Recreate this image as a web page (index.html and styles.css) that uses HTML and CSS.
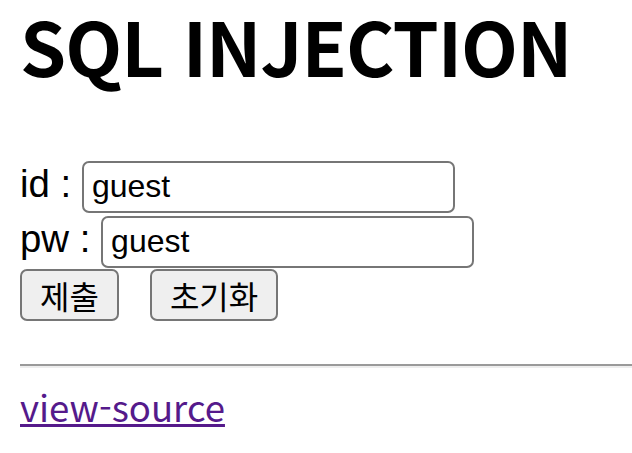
FILE: index.html
```html
<!DOCTYPE html>
<html lang="ko">

<head>
  <meta charset="UTF-8">
  <meta name="viewport" content="width=device-width, initial-scale=1.0">
  <title>SQL INJECTION</title>
  <link rel="stylesheet" href="styles.css">
</head>

<body>
  <h1>SQL INJECTION</h1>
  <form class="login-form">
    <div class="form-row row-id">
      <label for="id">id : </label>
      <input type="text" id="id" name="id" value="guest">
    </div>
    <div class="form-row row-pw">
      <label for="pw">pw : </label>
      <input type="text" id="pw" name="pw" value="guest">
    </div>
    <div class="form-row row-buttons">
      <button type="submit">제출</button>
      <button type="reset">초기화</button>
    </div>
  </form>
  <hr>
  <div class="source-link">
    <a href="#">view-source</a>
  </div>
</body>

</html>
```

FILE: styles.css
```css
body {
  margin: 0;
  padding-left: 20px;
  font-family: "Liberation Sans", Arial, "Noto Sans CJK KR", sans-serif;
  font-size: 38.4px;
  color: #000;
  background: #fff;
}

h1 {
  margin: 1px 0 0;
  font-family: "Noto Sans CJK KR", sans-serif;
  font-size: 74px;
  font-weight: bold;
  line-height: 1.2;
  letter-spacing: -1px;
}

.login-form {
  margin-top: 71px;
}

.form-row {
  display: flex;
  align-items: baseline;
  white-space: pre;
}

.row-pw {
  margin-top: 3px;
}

.row-buttons {
  gap: 31px;
  margin-top: 1px;
}

input {
  box-sizing: border-box;
  width: 373px;
  height: 52px;
  padding: 0 8px;
  font-family: "Liberation Sans", Arial, sans-serif;
  font-size: 32px;
  color: #000;
  border: 2px solid #767676;
  border-radius: 7px;
  background: #fff;
}

button {
  box-sizing: border-box;
  height: 52px;
  padding: 0 18px;
  font-family: "Noto Sans CJK KR", sans-serif;
  font-size: 32px;
  color: #000;
  background-color: #efefef;
  border: 2px solid #767676;
  border-radius: 7px;
}

hr {
  height: 0;
  margin: 43px 0 0;
  border: none;
  border-top: 2px solid #9a9a9a;
  border-bottom: 2px solid #eee;
}

.source-link {
  margin-top: 12px;
  font-family: "Noto Sans CJK KR", sans-serif;
  font-size: 36.6px;
}

.source-link a {
  color: #551a8b;
  text-decoration-thickness: 3px;
}
```
